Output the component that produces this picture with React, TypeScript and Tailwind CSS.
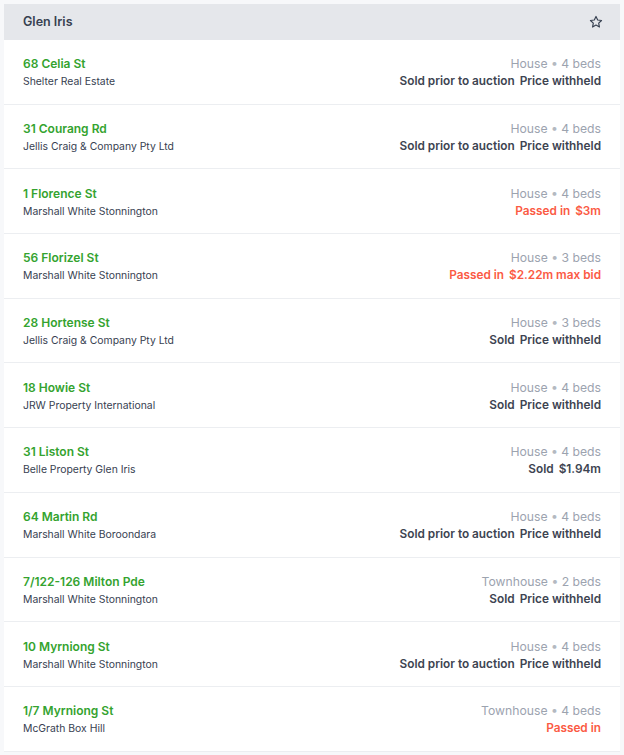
import React from "react";

type Row = { addr: string; agent: string; type: string; beds: string; status: string; price: string; red?: boolean };

const rows: Row[] = [
  { addr: "68 Celia St", agent: "Shelter Real Estate", type: "House", beds: "4 beds", status: "Sold prior to auction", price: "Price withheld" },
  { addr: "31 Courang Rd", agent: "Jellis Craig & Company Pty Ltd", type: "House", beds: "4 beds", status: "Sold prior to auction", price: "Price withheld" },
  { addr: "1 Florence St", agent: "Marshall White Stonnington", type: "House", beds: "4 beds", status: "Passed in", price: "$3m", red: true },
  { addr: "56 Florizel St", agent: "Marshall White Stonnington", type: "House", beds: "3 beds", status: "Passed in", price: "$2.22m max bid", red: true },
  { addr: "28 Hortense St", agent: "Jellis Craig & Company Pty Ltd", type: "House", beds: "3 beds", status: "Sold", price: "Price withheld" },
  { addr: "18 Howie St", agent: "JRW Property International", type: "House", beds: "4 beds", status: "Sold", price: "Price withheld" },
  { addr: "31 Liston St", agent: "Belle Property Glen Iris", type: "House", beds: "4 beds", status: "Sold", price: "$1.94m" },
  { addr: "64 Martin Rd", agent: "Marshall White Boroondara", type: "House", beds: "4 beds", status: "Sold prior to auction", price: "Price withheld" },
  { addr: "7/122-126 Milton Pde", agent: "Marshall White Stonnington", type: "Townhouse", beds: "2 beds", status: "Sold", price: "Price withheld" },
  { addr: "10 Myrniong St", agent: "Marshall White Stonnington", type: "House", beds: "4 beds", status: "Sold prior to auction", price: "Price withheld" },
  { addr: "1/7 Myrniong St", agent: "McGrath Box Hill", type: "Townhouse", beds: "4 beds", status: "Passed in", price: "", red: true },
];

export default function App() {
  return (
    <div className="min-h-[755px] bg-[#f7f8fa] pt-1 px-1" style={{ fontFamily: "Inter, 'Noto Sans', sans-serif" }}>
      <div className="bg-white">
        <div className="h-9 bg-[#e5e7eb] flex items-center justify-between pl-[19px] pr-[17px]">
          <span className="text-[12.5px] font-semibold text-[#374151]">Glen Iris</span>
          <svg width="14" height="14" viewBox="0 0 24 24" fill="none" stroke="#374151" strokeWidth="2" strokeLinejoin="round">
            <path d="M12 2.5l2.9 6.1 6.6.8-4.9 4.6 1.3 6.6L12 17.3l-5.9 3.3 1.3-6.6-4.9-4.6 6.6-.8z" />
          </svg>
        </div>
        {rows.map((r, i) => (
          <div key={i} className="h-[64.7px] border-b border-[#eceef1] flex items-center justify-between pl-[19px] pr-[19px] pt-[2px]">
            <div className="flex flex-col gap-[4px]">
              <span className="text-[12px] font-semibold text-[#34a32f] leading-[15px]">{r.addr}</span>
              <span className="text-[10.4px] text-[#374151] leading-[14px]">{r.agent}</span>
            </div>
            <div className="flex flex-col items-end gap-[3px]">
              <span className="text-[12.2px] text-[#9ca3af] leading-[15px]">
                {r.type} <span className="text-[#b4b9c1]">•</span> {r.beds}
              </span>
              <span className={`text-[11.8px] font-semibold leading-[15px] ${r.red ? "text-[#fb5a44]" : "text-[#3d4451]"}`}>
                {r.status}
                {r.price && <span className="ml-[5px]">{r.price}</span>}
              </span>
            </div>
          </div>
        ))}
      </div>
    </div>
  );
}
